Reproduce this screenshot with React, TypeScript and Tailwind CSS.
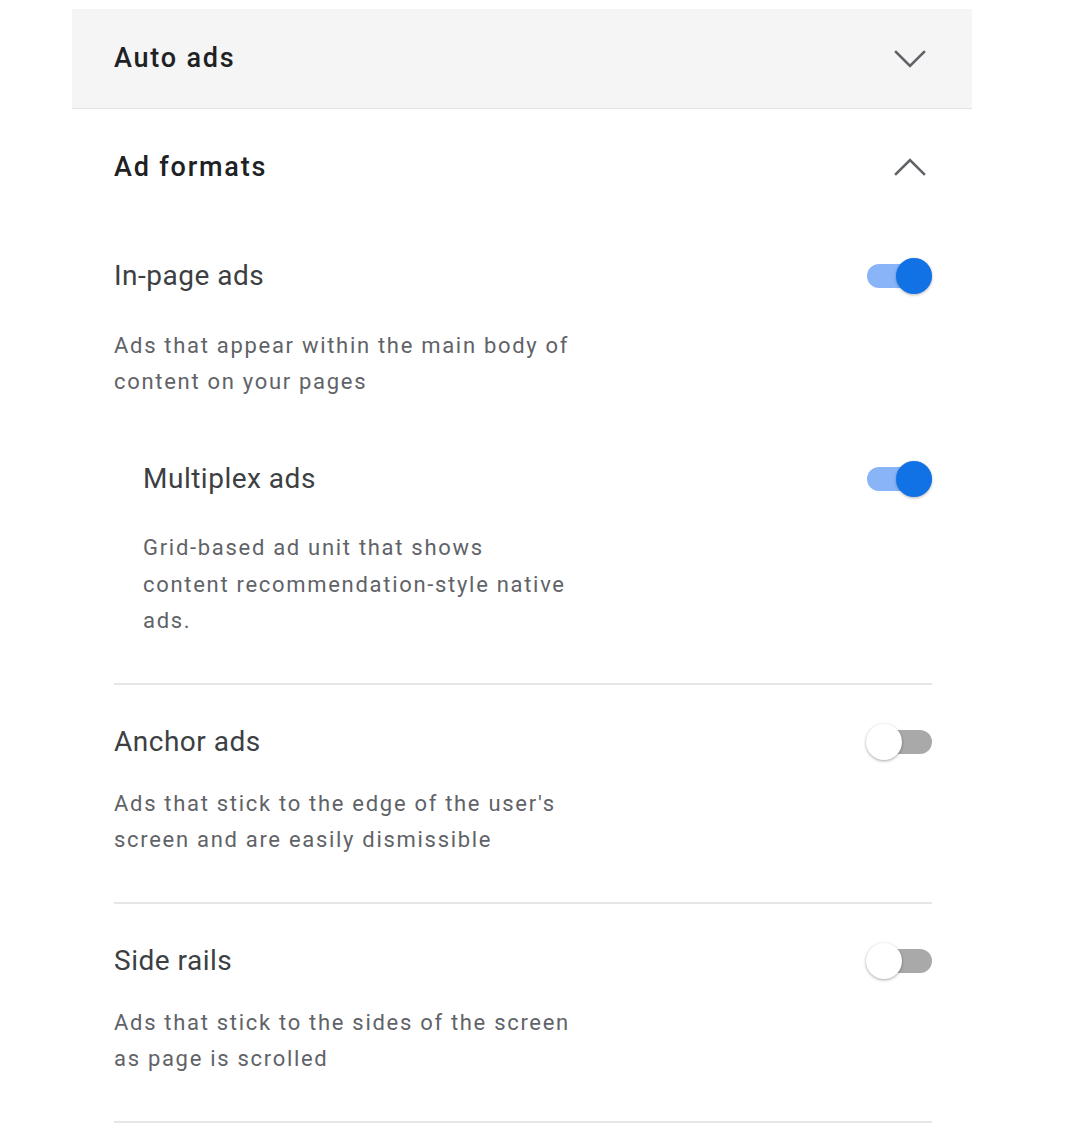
import React from 'react'

function Chevron({ up }: { up?: boolean }) {
  return (
    <svg width="32" height="20" viewBox="0 0 32 20" fill="none" className="text-[#5f6368]">
      <polyline
        points={up ? '2,17 16,3 30,17' : '2,3 16,17 30,3'}
        stroke="currentColor"
        strokeWidth="2.6"
        strokeLinecap="square"
        strokeLinejoin="miter"
      />
    </svg>
  )
}

function Toggle({ on }: { on: boolean }) {
  return (
    <div className="relative w-[66px] h-[40px] flex items-center">
      <div
        className={
          on
            ? 'ml-[1px] w-[65px] h-[24px] rounded-full bg-[#8ab4f8]'
            : 'ml-[1px] w-[65px] h-[24px] rounded-full bg-[#a9a9a9]'
        }
      />
      <div
        className={
          on
            ? 'absolute top-[2px] left-[30px] w-[36px] h-[36px] rounded-full bg-[#1172e6] shadow-[0_1px_3px_rgba(0,0,0,0.3)]'
            : 'absolute top-[2px] left-0 w-[36px] h-[36px] rounded-full bg-white shadow-[0_1px_3px_rgba(0,0,0,0.35)]'
        }
      />
    </div>
  )
}

function Format({
  title,
  desc,
  on,
  descGap,
}: {
  title: string
  desc: string
  on: boolean
  descGap: string
}) {
  return (
    <div>
      <div className="flex items-center justify-between h-[40px]">
        <span className="text-[28px] text-[#3c4043] tracking-[0.5px]">{title}</span>
        <Toggle on={on} />
      </div>
      <p className={`${descGap} w-[470px] text-[22px] leading-[36px] text-[#5f6368] tracking-[1.7px]`}>
        {desc}
      </p>
    </div>
  )
}

export default function App() {
  return (
    <div className="bg-white min-h-[1131px] pt-[9px]" style={{ fontFamily: 'Roboto, "Liberation Sans", sans-serif' }}>
      <div className="ml-[72px] w-[900px]">
        {/* Auto ads header */}
        <div className="h-[100px] bg-[#f5f5f5] border-b border-[#e2e2e2] flex items-center justify-between pl-[42px] pr-[46px]">
          <span className="text-[27px] font-medium text-[#202124] tracking-[1.8px]">Auto ads</span>
          <Chevron />
        </div>

        {/* Ad formats */}
        <div className="h-[116px] flex items-center justify-between pl-[42px] pr-[46px]">
          <span className="text-[27px] font-medium text-[#202124] tracking-[1.8px]">Ad formats</span>
          <Chevron up />
        </div>

        <div className="pl-[42px] pr-[40px]">
          <div className="pt-[31px]">
            <Format
              title="In-page ads"
              desc="Ads that appear within the main body of content on your pages"
              on
              descGap="mt-[32px]"
            />
            <div className="mt-[59px] pl-[29px]">
              <div className="flex items-center justify-between h-[40px]">
                <span className="text-[28px] text-[#3c4043] tracking-[0.5px]">Multiplex ads</span>
                <Toggle on />
              </div>
              <p className="mt-[31px] w-[426px] text-[22px] leading-[36.5px] text-[#5f6368] tracking-[1.7px]">
                Grid-based ad unit that shows content recommendation-style native ads.
              </p>
            </div>
          </div>

          <div className="mt-[43px] border-t-2 border-[#e6e6e6]" />

          <div className="pt-[37px]">
            <Format
              title="Anchor ads"
              desc="Ads that stick to the edge of the user's screen and are easily dismissible"
              on={false}
              descGap="mt-[24px]"
            />
          </div>

          <div className="mt-[44px] border-t-2 border-[#e6e6e6]" />

          <div className="pt-[37px]">
            <Format
              title="Side rails"
              desc="Ads that stick to the sides of the screen as page is scrolled"
              on={false}
              descGap="mt-[24px]"
            />
          </div>

          <div className="mt-[44px] border-t-2 border-[#e6e6e6]" />
        </div>
      </div>
    </div>
  )
}
